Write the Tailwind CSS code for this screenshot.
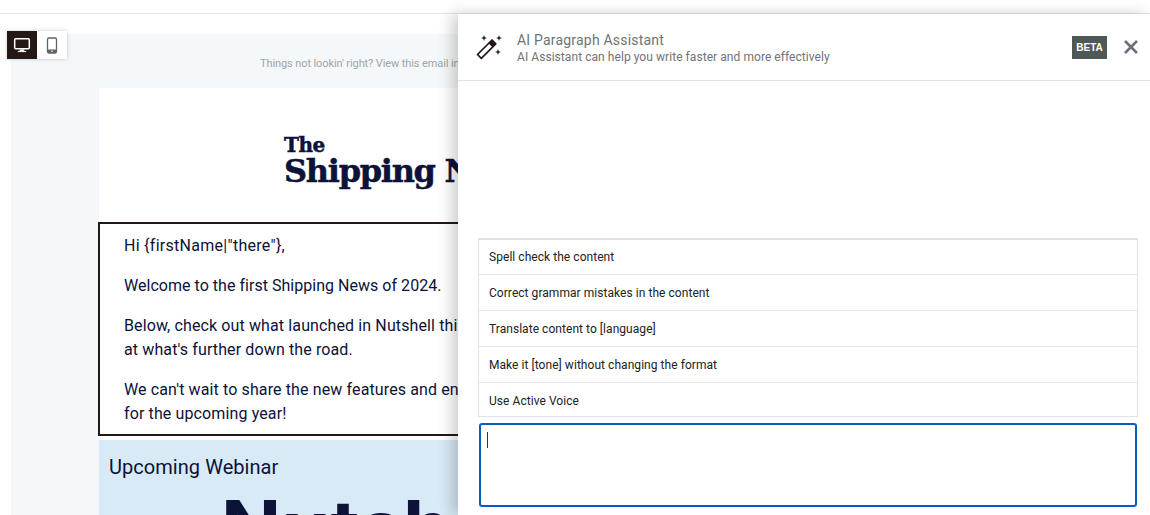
<!DOCTYPE html>
<html lang="en">
<head>
  <meta charset="UTF-8">
  <title>AI Paragraph Assistant</title>
  <script src="https://cdn.jsdelivr.net/npm/@tailwindcss/browser@4"></script>
</head>
<body class="relative h-[515px] w-[1150px] overflow-hidden bg-white font-['Roboto','Liberation_Sans',sans-serif]">
  <!-- top bar -->
  <div class="h-[14px] border-b border-[#e4e4e4]"></div>

  <!-- email preview -->
  <div class="pt-[20px] pl-[11px]">
    <div class="h-[54px] w-[447px] overflow-hidden bg-[#f5f8fa] pl-[249px] pt-[14px] text-[11px] leading-[31px] tracking-[-0.1px] text-[#a0a4a8] whitespace-nowrap">Things not lookin' right? View this email in</div>
    <div class="w-[447px] bg-[#f5f7fb] pl-[88px]">
      <div class="w-[359px] bg-white">
        <div class="h-[134px] pl-[185px] pt-[47px] font-['DejaVu_Serif',serif] font-bold text-[#0c1238] whitespace-nowrap [-webkit-text-stroke:0.5px_#0c1238]">
          <div class="text-[20px] leading-[20px] tracking-[-0.5px]">The</div>
          <div class="pt-[1px] text-[32px] leading-[30px] tracking-[-1.3px]">Shipping N</div>
        </div>
        <div class="-ml-px h-[214px] overflow-hidden border-2 border-r-0 border-[#231815] pl-[24px] pt-[10px] text-[16px] leading-[24px] tracking-[0.03px] text-[#0c1238] whitespace-nowrap">
          <p class="mb-[16px] tracking-[0.28px]">Hi {firstName|"there"},</p>
          <p class="mb-[16px]">Welcome to the first Shipping News of 2024.</p>
          <p class="mb-[16px] tracking-[0.12px]">Below, check out what launched in Nutshell thi<br>at what's further down the road.</p>
          <p class="tracking-[0.12px]">We can't wait to share the new features and en<br>for the upcoming year!</p>
        </div>
        <div class="mt-[4px] h-[75px] overflow-hidden bg-[#d7eaf5] pl-[10px] pt-[14px] text-[#0c1238] whitespace-nowrap">
          <div class="text-[20px] leading-[26px] tracking-[0.05px]">Upcoming Webinar</div>
          <div class="pl-[112px] pt-[8px] font-['Inter',sans-serif] text-[79px] font-bold leading-[80px]">Nutshe</div>
        </div>
      </div>
    </div>
  </div>

  <!-- device toggle -->
  <div class="absolute left-[7px] top-[31px] flex h-[28px] w-[60px] bg-white shadow-[0_0_4px_rgba(0,0,0,0.2)]">
    <div class="flex w-[30px] items-center justify-center bg-[#231815]">
      <svg width="18" height="16" viewBox="0 0 18 16" fill="none">
        <rect x="1.7" y="1.7" width="14.6" height="10" rx="1" stroke="#fff" stroke-width="1.5"/>
        <path d="M7 12.5h4l.6 1.8H6.4z" fill="#fff"/>
        <path d="M4.8 14.6h8.4" stroke="#fff"/>
      </svg>
    </div>
    <div class="flex w-[30px] items-center justify-center">
      <svg width="12" height="17" viewBox="0 0 12 17" fill="none">
        <rect x="1.5" y="1" width="9" height="15" rx="1.4" stroke="#5f6468" stroke-width="1.3"/>
        <path d="M1.5 12.5h9V15a1 1 0 0 1-1 1h-7a1 1 0 0 1-1-1z" fill="#5f6468"/>
        <circle cx="6" cy="14.3" r=".8" fill="#fff"/>
      </svg>
    </div>
  </div>

  <!-- assistant panel -->
  <aside class="absolute bottom-0 left-[458px] right-0 top-[14px] bg-white shadow-[-6px_0_14px_rgba(0,0,0,0.2)]">
    <header class="flex h-[67px] items-center border-b border-[#e2e2e2] pl-[17px] pr-[11px]">
      <svg class="shrink-0" width="28" height="28" viewBox="0 0 28 28" fill="#231815">
        <path d="M2.5 21.5 17 7l3.8 3.8L6.3 25.3z" fill="none" stroke="#231815" stroke-width="1.7" stroke-linejoin="round"/>
        <path d="M13.6 10.4 17 7l3.8 3.8-3.4 3.4z"/>
        <path d="M9 2l.8 2.2L12 5l-2.2.8L9 8l-.8-2.2L6 5l2.2-.8z"/>
        <path d="M24 2l.8 2.2L27 5l-2.2.8L24 8l-.8-2.2L21 5l2.2-.8z"/>
        <path d="M23 16l.8 2.2L26 19l-2.2.8L23 22l-.8-2.2L20 19l2.2-.8z"/>
      </svg>
      <div class="ml-[14px] flex-1 pt-[2px] text-[#6f7378] whitespace-nowrap">
        <div class="text-[14px] leading-[17px] tracking-[0.2px]">AI Paragraph Assistant</div>
        <div class="text-[12px] leading-[16px] tracking-[0.06px]">AI Assistant can help you write faster and more effectively</div>
      </div>
      <span class="flex h-[23px] w-[35px] items-center justify-center bg-[#4f5757] font-['Liberation_Sans',sans-serif] text-[10px] font-bold text-white">BETA</span>
      <svg class="ml-[16px]" width="16" height="16" viewBox="0 0 16 16" fill="none">
        <path d="M2 2l12 12M14 2 2 14" stroke="#6b7079" stroke-width="2.6"/>
      </svg>
    </header>

    <div class="ml-[20px] mr-[12px] mt-[157px] border border-t-2 border-[#e2e2e2] text-[12px] tracking-[0.05px] text-[#222]">
      <div class="flex h-[35px] items-center border-b border-[#e2e4e8] px-[10px]">Spell check the content</div>
      <div class="flex h-[36px] items-center border-b border-[#e2e4e8] px-[10px]">Correct grammar mistakes in the content</div>
      <div class="flex h-[36px] items-center border-b border-[#e2e4e8] px-[10px]">Translate content to [language]</div>
      <div class="flex h-[36px] items-center border-b border-[#e2e4e8] px-[10px]">Make it [tone] without changing the format</div>
      <div class="flex h-[33px] items-center px-[10px] pt-[2px]">Use Active Voice</div>
    </div>

    <div class="ml-[21px] mr-[13px] mt-[6px] h-[84px] rounded-[3px] border-2 border-[#0060c8] pl-[6px] pt-[7px]">
      <div class="h-[16px] w-px bg-[#333]"></div>
    </div>
  </aside>
</body>
</html>
